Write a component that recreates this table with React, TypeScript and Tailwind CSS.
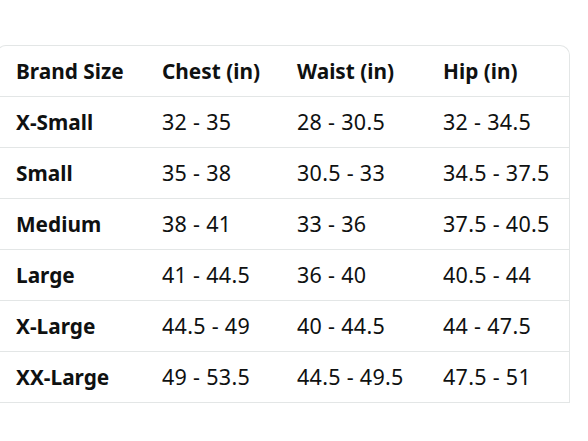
const headers = ['Brand Size', 'Chest (in)', 'Waist (in)', 'Hip (in)'];

const rows = [
  ['X-Small', '32 - 35', '28 - 30.5', '32 - 34.5'],
  ['Small', '35 - 38', '30.5 - 33', '34.5 - 37.5'],
  ['Medium', '38 - 41', '33 - 36', '37.5 - 40.5'],
  ['Large', '41 - 44.5', '36 - 40', '40.5 - 44'],
  ['X-Large', '44.5 - 49', '40 - 44.5', '44 - 47.5'],
  ['XX-Large', '49 - 53.5', '44.5 - 49.5', '47.5 - 51'],
];

function Row({ cells, header }: { cells: string[]; header?: boolean }) {
  return (
    <div className="grid h-[51px] grid-cols-[149px_135px_146px_1fr] items-center border-b border-[#e3e6e6]">
      {cells.map((c, i) => (
        <div
          key={i}
          className={`leading-none ${
            header || i === 0
              ? 'text-[20.8px] font-bold'
              : 'text-[21.5px] font-normal tracking-[0.3px]'
          } ${i === 0 ? 'pl-[19px]' : 'pl-4'}`}
        >
          {c}
        </div>
      ))}
    </div>
  );
}

export default function App() {
  return (
    <div className="min-h-[441px] w-[588px] overflow-hidden bg-white pt-[45px] font-['Noto_Sans',sans-serif] text-[#0f1111]">
      <div className="-ml-[4px] w-[574px] rounded-t-[10px] border border-b-0 border-[#e3e6e6]">
        <Row cells={headers} header />
        {rows.map((r) => (
          <Row key={r[0]} cells={r} />
        ))}
      </div>
    </div>
  );
}
